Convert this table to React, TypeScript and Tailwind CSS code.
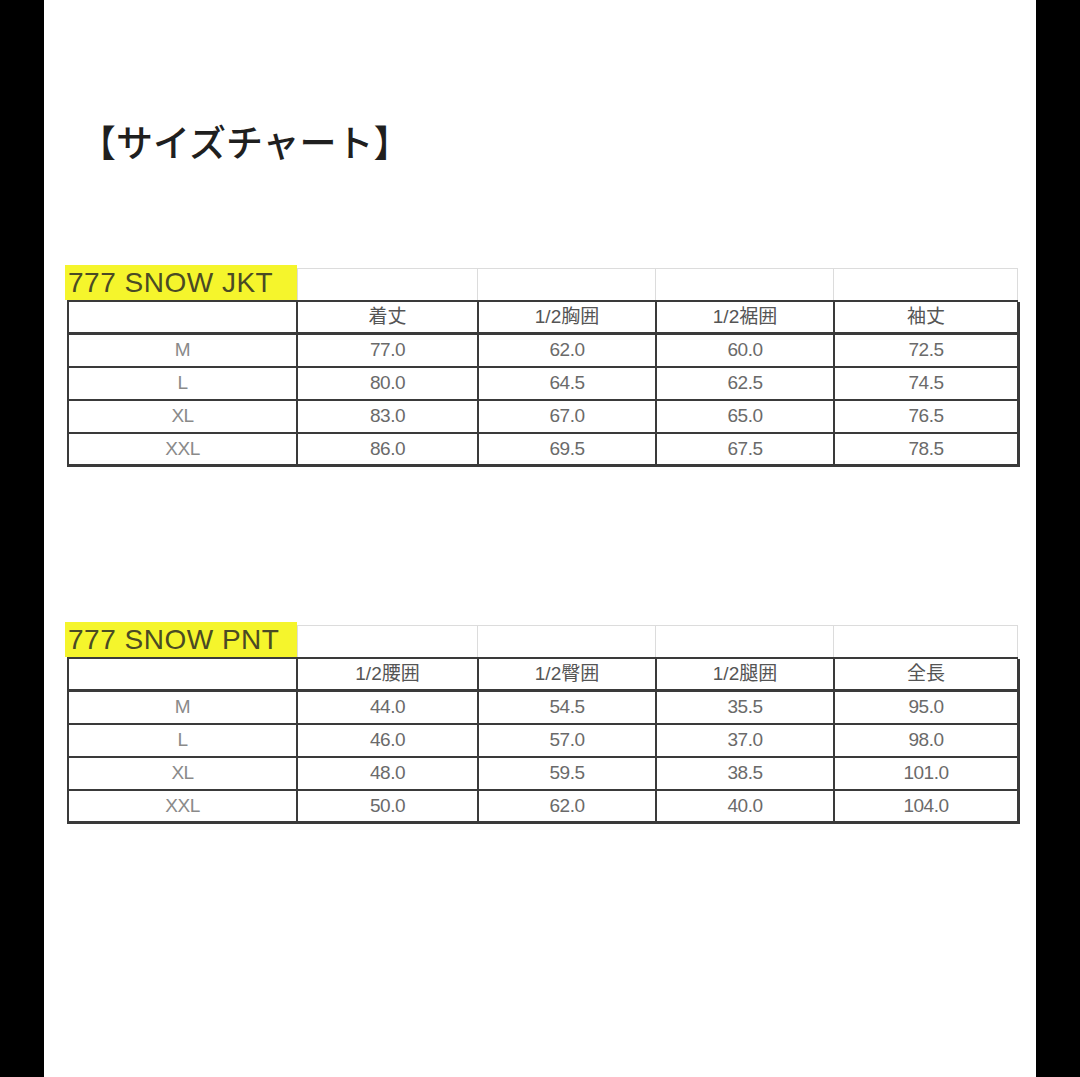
import { ReactElement } from 'react';

type Chart = {
  label: string;
  headers: string[];
  rows: string[][];
};

const CHARTS: Chart[] = [
  {
    label: '777 SNOW JKT',
    headers: ['着丈', '1/2胸囲', '1/2裾囲', '袖丈'],
    rows: [
      ['M', '77.0', '62.0', '60.0', '72.5'],
      ['L', '80.0', '64.5', '62.5', '74.5'],
      ['XL', '83.0', '67.0', '65.0', '76.5'],
      ['XXL', '86.0', '69.5', '67.5', '78.5'],
    ],
  },
  {
    label: '777 SNOW PNT',
    headers: ['1/2腰囲', '1/2臀囲', '1/2腿囲', '全長'],
    rows: [
      ['M', '44.0', '54.5', '35.5', '95.0'],
      ['L', '46.0', '57.0', '37.0', '98.0'],
      ['XL', '48.0', '59.5', '38.5', '101.0'],
      ['XXL', '50.0', '62.0', '40.0', '104.0'],
    ],
  },
];

const FONT = "font-['Liberation_Sans','Noto_Sans_CJK_JP',sans-serif]";

function SizeTable({ label, headers, rows }: Chart): ReactElement {
  return (
    <section className="ml-[21px] w-[953px]">
      {/* label row: yellow tag + light empty cells */}
      <div className="flex h-[35px]">
        <div className="w-[232px] bg-[#f5f52c] pl-[3px] flex items-center">
          <span className="text-[28px] leading-none tracking-[0.5px] text-[#4a4a24]">{label}</span>
        </div>
        <div className="flex-1 mt-[3px] grid grid-cols-[181px_178px_178px_184px] border-t border-[#dcdcdc]">
          {headers.map((h) => (
            <div key={h} className="border-r border-[#dcdcdc] first:border-l" />
          ))}
        </div>
      </div>
      <div className="ml-[2px] w-[951px] grid grid-cols-[229px_181px_178px_178px_185px] border-l-2 border-t-2 border-[#3a3a3a] text-[#6a6a6a]">
        <div className="h-[33px] border-r-2 border-b-[3px] border-[#3a3a3a]" />
        {headers.map((h, i) => (
          <div
            key={h}
            className={`h-[33px] flex items-center justify-center text-[19px] text-[#555] border-b-[3px] border-[#3a3a3a] ${
              i === headers.length - 1 ? 'border-r-[3px]' : 'border-r-2'
            }`}
          >
            {h}
          </div>
        ))}
        {rows.map((row, r) =>
          row.map((cell, c) => (
            <div
              key={`${r}-${c}`}
              className={`h-[33px] flex items-center justify-center text-[19px] tracking-[-0.5px] border-[#3a3a3a] ${
                c === 0 ? 'text-[#8a8a8a]' : ''
              } ${c === row.length - 1 ? 'border-r-[3px]' : 'border-r-2'} ${
                r === rows.length - 1 ? 'border-b-[3px]' : 'border-b-2'
              }`}
            >
              {cell}
            </div>
          )),
        )}
      </div>
    </section>
  );
}

export default function App(): ReactElement {
  return (
    <main className={`flex w-[1080px] h-[1077px] bg-black ${FONT}`}>
      <div className="w-[44px] shrink-0 bg-black" />
      <div className="w-[992px] shrink-0 bg-white flex flex-col">
        <h1 className="mt-[120px] ml-[35px] h-[42px] flex items-center text-[37px] leading-none text-[#1f1f1f] font-['Noto_Sans_CJK_JP',sans-serif] font-medium">
          【サイズチャート】
        </h1>
        <div className="mt-[103px]">
          <SizeTable {...CHARTS[0]} />
        </div>
        <div className="mt-[155px]">
          <SizeTable {...CHARTS[1]} />
        </div>
      </div>
      <div className="w-[44px] shrink-0 bg-black" />
    </main>
  );
}
